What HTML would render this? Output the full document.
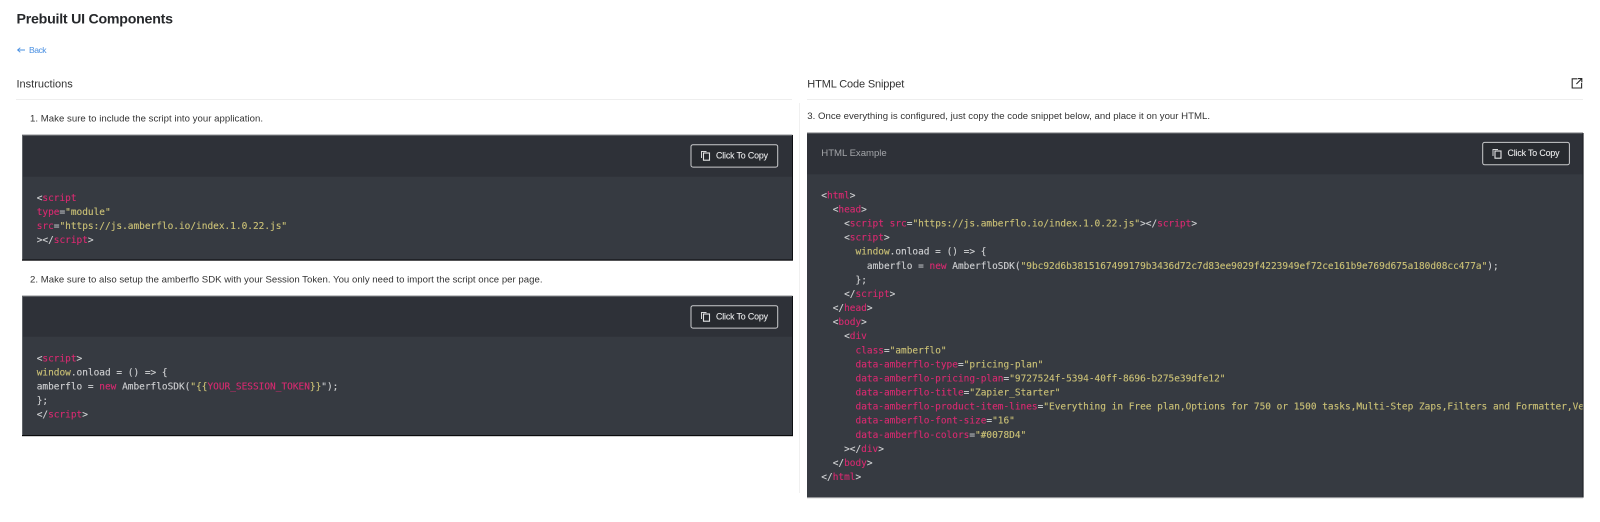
<!DOCTYPE html>
<html lang="en"><head><meta charset="utf-8"><title>Prebuilt UI Components</title>
<style>
html,body{margin:0;padding:0;background:#fff;width:1600px;height:522px;overflow:hidden}
svg{display:block;filter:blur(.3px)}
text{font-family:"Liberation Sans",sans-serif;fill:#333;white-space:pre}
.c text{font-family:"DejaVu Sans Mono","Liberation Mono",monospace;font-size:9.46px;fill:#cfd0d2;stroke:#cfd0d2;stroke-width:.12px}
.c .p{fill:#d82a70;stroke:#d82a70}
.c .y{fill:#cbc176;stroke:#cbc176}
.b{fill:#e8e9ea;font-size:8.8px;stroke:#e8e9ea;stroke-width:.1px}
</style></head><body>
<svg xmlns="http://www.w3.org/2000/svg" width="1600" height="522" viewBox="0 0 1600 522">
<rect width="1600" height="522" fill="#fff"/>
<text x="16.5" y="23.3" font-size="14.2" font-weight="bold" textLength="156.5" style="fill:#26282b">Prebuilt UI Components</text>
<path d="M25 50H17.8M20.3 47.7L17.6 50L20.3 52.3" fill="none" stroke="#4a90e2" stroke-width=".9"/>
<text x="29" y="53.2" font-size="8.6" textLength="17.6" style="fill:#4a90e2">Back</text>
<text x="16.5" y="87.3" font-size="11" textLength="56.3">Instructions</text>
<text x="807.3" y="87.3" font-size="11" textLength="97">HTML Code Snippet</text>
<rect x="16" y="99" width="776" height="1" fill="#eeeeee"/>
<rect x="807" y="99" width="776" height="1" fill="#eeeeee"/>
<rect x="799" y="103" width="1" height="390" fill="#f0f0f0"/>
<path d="M1577.5 78.8H1572.2V88H1581.6V83M1576.4 84L1581.4 79M1578 78.6H1581.8V82.4" fill="none" stroke="#2b2b2b" stroke-width="1.1"/>
<text x="30" y="121.7" font-size="9.6" textLength="233">1. Make sure to include the script into your application.</text>
<text x="30" y="282.7" font-size="9.6" textLength="512.5">2. Make sure to also setup the amberflo SDK with your Session Token. You only need to import the script once per page.</text>
<text x="807.3" y="119" font-size="9.6" textLength="402.7">3. Once everything is configured, just copy the code snippet below, and place it on your HTML.</text>

<!-- block 1 -->
<rect x="22" y="135" width="770.5" height="125" fill="#363a41"/>
<rect x="22" y="135" width="770.5" height="41.7" fill="#2e3138"/>
<rect x="22" y="134.5" width="770.5" height="1" fill="#8b8d90"/>
<rect x="22" y="135" width="1" height="125" fill="#5f6368"/>
<rect x="792" y="135" width="1" height="125" fill="#0d0f12"/>
<rect x="22" y="259.5" width="771" height="1.2" fill="#0a0b0d"/>
<rect x="691" y="144.7" width="86.7" height="22.4" rx="2" fill="#272a2f" stroke="#c9cacc" stroke-width="1"/>
<path d="M701.5 158V151.5H706.5" fill="none" stroke="#d5d6d8" stroke-width="1"/><rect x="703.5" y="153" width="6" height="7.2" fill="none" stroke="#e4e5e6" stroke-width="1.1"/>
<text class="b" x="716" y="158.3" textLength="52">Click To Copy</text>
<g class="c">
<text x="36.7" y="201">&lt;<tspan class="p">script</tspan></text>
<text x="36.7" y="215"><tspan class="p">type</tspan>=<tspan class="y">"module"</tspan></text>
<text x="36.7" y="229"><tspan class="p">src</tspan>=<tspan class="y">"https://js.amberflo.io/index.1.0.22.js"</tspan></text>
<text x="36.7" y="243">&gt;&lt;/<tspan class="p">script</tspan>&gt;</text>
</g>

<!-- block 2 -->
<rect x="22" y="296" width="770.5" height="139.5" fill="#363a41"/>
<rect x="22" y="296" width="770.5" height="40.7" fill="#2e3138"/>
<rect x="22" y="295.5" width="770.5" height="1" fill="#8b8d90"/>
<rect x="22" y="296" width="1" height="139.5" fill="#5f6368"/>
<rect x="792" y="296" width="1" height="139.5" fill="#0d0f12"/>
<rect x="22" y="435" width="771" height="1.2" fill="#0a0b0d"/>
<rect x="691" y="305.7" width="86.7" height="22.4" rx="2" fill="#272a2f" stroke="#c9cacc" stroke-width="1"/>
<path d="M701.5 319V312.5H706.5" fill="none" stroke="#d5d6d8" stroke-width="1"/><rect x="703.5" y="314" width="6" height="7.2" fill="none" stroke="#e4e5e6" stroke-width="1.1"/>
<text class="b" x="716" y="319.3" textLength="52">Click To Copy</text>
<g class="c">
<text x="36.7" y="361.6">&lt;<tspan class="p">script</tspan>&gt;</text>
<text x="36.7" y="375.6"><tspan class="y">window</tspan>.onload = () =&gt; {</text>
<text x="36.7" y="389.6">amberflo = <tspan class="p">new</tspan> AmberfloSDK(<tspan class="y">"{{</tspan><tspan class="p">YOUR_SESSION_TOKEN</tspan><tspan class="y">}}</tspan>");</text>
<text x="36.7" y="403.6">};</text>
<text x="36.7" y="417.6">&lt;/<tspan class="p">script</tspan>&gt;</text>
</g>

<!-- block 3 -->
<rect x="807" y="133" width="776" height="364.5" fill="#363a41"/>
<rect x="807" y="133" width="776" height="41.3" fill="#2e3138"/>
<rect x="807" y="132.4" width="776" height="1" fill="#8b8d90"/>
<text x="821.3" y="156" font-size="9.6" textLength="65.4" style="fill:#a3a5a9">HTML Example</text>
<rect x="1482.7" y="142.4" width="86.7" height="22.4" rx="2" fill="#272a2f" stroke="#c9cacc" stroke-width="1"/>
<path d="M1493 156V149.5H1498" fill="none" stroke="#d5d6d8" stroke-width="1"/><rect x="1495" y="151" width="6" height="7.2" fill="none" stroke="#e4e5e6" stroke-width="1.1"/>
<text class="b" x="1507.5" y="156" textLength="52">Click To Copy</text>
<g class="c">
<text x="821.3" y="198.4">&lt;<tspan class="p">html</tspan>&gt;</text>
<text x="832.7" y="212.5">&lt;<tspan class="p">head</tspan>&gt;</text>
<text x="844.1" y="226.6">&lt;<tspan class="p">script</tspan> <tspan class="p">src</tspan>=<tspan class="y">"https://js.amberflo.io/index.1.0.22.js"</tspan>&gt;&lt;/<tspan class="p">script</tspan>&gt;</text>
<text x="844.1" y="240.6">&lt;<tspan class="p">script</tspan>&gt;</text>
<text x="855.5" y="254.7"><tspan class="y">window</tspan>.onload = () =&gt; {</text>
<text x="866.9" y="268.8">amberflo = <tspan class="p">new</tspan> AmberfloSDK(<tspan class="y">"9bc92d6b3815167499179b3436d72c7d83ee9029f4223949ef72ce161b9e769d675a180d08cc477a"</tspan>);</text>
<text x="855.5" y="282.9">};</text>
<text x="844.1" y="297">&lt;/<tspan class="p">script</tspan>&gt;</text>
<text x="832.7" y="311">&lt;/<tspan class="p">head</tspan>&gt;</text>
<text x="832.7" y="325.1">&lt;<tspan class="p">body</tspan>&gt;</text>
<text x="844.1" y="339.2">&lt;<tspan class="p">div</tspan></text>
<text x="855.5" y="353.3"><tspan class="p">class</tspan>=<tspan class="y">"amberflo"</tspan></text>
<text x="855.5" y="367.4"><tspan class="p">data-amberflo-type</tspan>=<tspan class="y">"pricing-plan"</tspan></text>
<text x="855.5" y="381.4"><tspan class="p">data-amberflo-pricing-plan</tspan>=<tspan class="y">"9727524f-5394-40ff-8696-b275e39dfe12"</tspan></text>
<text x="855.5" y="395.5"><tspan class="p">data-amberflo-title</tspan>=<tspan class="y">"Zapier_Starter"</tspan></text>
<text x="855.5" y="409.6"><tspan class="p">data-amberflo-product-item-lines</tspan>=<tspan class="y">"Everything in Free plan,Options for 750 or 1500 tasks,Multi-Step Zaps,Filters and Formatter,Ve</tspan></text>
<text x="855.5" y="423.7"><tspan class="p">data-amberflo-font-size</tspan>=<tspan class="y">"16"</tspan></text>
<text x="855.5" y="437.8"><tspan class="p">data-amberflo-colors</tspan>=<tspan class="y">"#0078D4"</tspan></text>
<text x="844.1" y="451.8">&gt;&lt;/<tspan class="p">div</tspan>&gt;</text>
<text x="832.7" y="465.9">&lt;/<tspan class="p">body</tspan>&gt;</text>
<text x="821.3" y="480">&lt;/<tspan class="p">html</tspan>&gt;</text>
</g>
<rect x="1583.5" y="125" width="16.5" height="380" fill="#fff"/>
<rect x="1582.6" y="133" width="1" height="364.5" fill="#1a1d21"/>
<rect x="807" y="497.3" width="776" height="1" fill="#b9babc"/>
</svg>
</body></html>
